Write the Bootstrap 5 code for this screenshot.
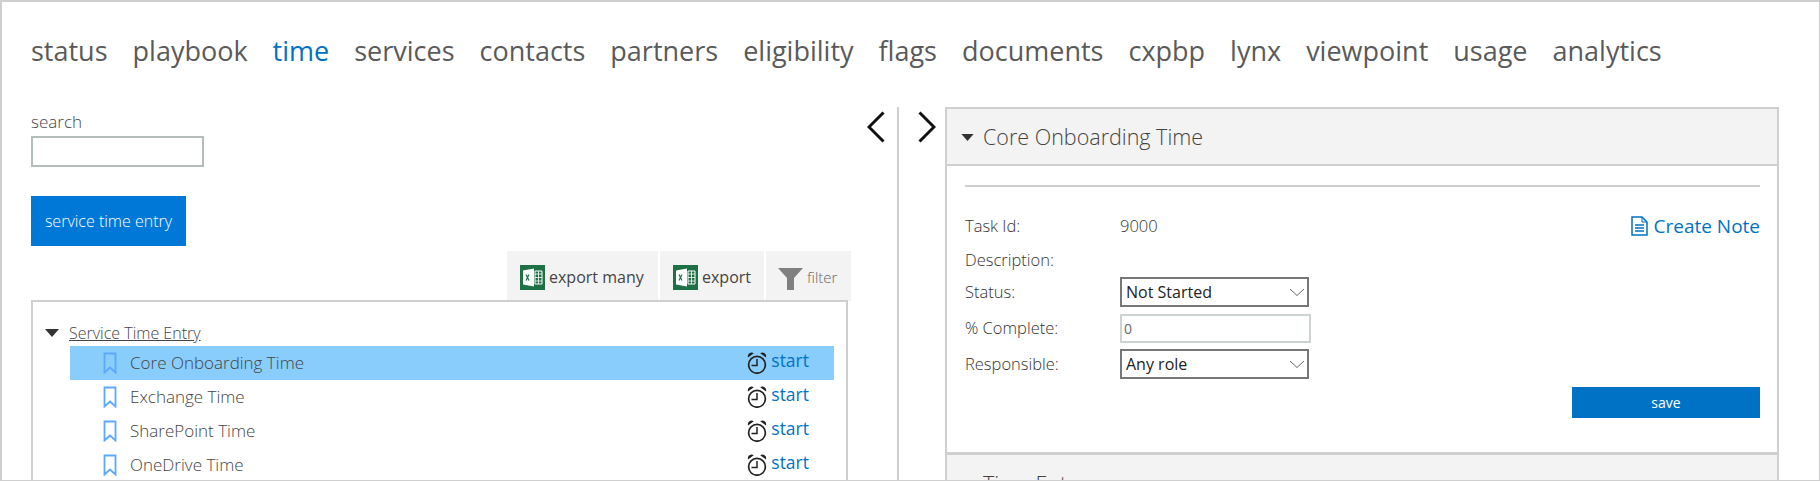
<!DOCTYPE html>
<html lang="en">
<head>
  <meta charset="UTF-8">
  <title>time</title>
  <link href="https://cdn.jsdelivr.net/npm/bootstrap@5.3.3/dist/css/bootstrap.min.css" rel="stylesheet">
  <style>
    html, body { height: 481px; overflow: hidden; }
    body { font-family: "Open Sans", "Liberation Sans", sans-serif; color: #505050; background: #fff; }
    .frame { height: 481px; overflow: hidden; border: 1px solid #cfcfcf; border-top: 2px solid #cfcfcf; border-left-width: 2px; }
    .topnav { padding: 31px 0 0 29px; gap: 25px; height: 105px; font-size: 27px; line-height: 36px; }
    .topnav a { color: #5a5a5a; text-decoration: none; }
    .topnav a.active { color: #0072c6; }
    .leftcol { width: 849px; flex: none; padding: 1px 0 0 29px; }
    .searchlbl { font-size: 17px; font-weight: 300; line-height: 28px; color: #444; display: block; margin: 0; }
    .searchbox { width: 173px; height: 31px; border: 2px solid #b4bcbc; display: block; }
    .btn-entry { width: 155px; height: 50px; margin-top: 29px; background: #0078d7; color: #fff; border: 0; border-radius: 0; font-size: 16px; padding: 0; font-weight: 300; }
    .tabbar { margin-top: 5px; height: 50px; gap: 2px; }
    .tabitem { background: #f3f3f3; height: 50px; display: flex; align-items: center; font-size: 16px; color: #444; padding-top: 2px; }
    .tabitem.many { width: 151px; padding-left: 13px; }
    .tabitem.one { width: 104px; padding-left: 13px; }
    .tabitem.filt { width: 85px; padding-left: 12px; color: #666; font-size: 15px; font-weight: 300; }
    .treebox { width: 817px; height: 300px; border: 2px solid #cfcfcf; padding: 17px 12px 0 12px; margin-top: -1px; position: relative; background: #fff; }
    .treehead { height: 27px; font-size: 16px; line-height: 22px; color: #444; font-weight: 300; }
    .treehead span { text-decoration: underline; margin-left: 10px; }
    .treerow { height: 34px; margin-left: 25px; padding-left: 33px; padding-right: 25px; font-size: 17px; font-weight: 300; color: #444; }
    .treerow.sel { background: #88cdfb; }
    .treerow .lbl { margin-left: 13px; flex-grow: 1; }
    .startlink { color: #0072c6; text-decoration: none; font-size: 17.500px; font-weight: 500; margin-left: 4px; position: relative; top: -3px; }
    .splitter { width: 94px; flex: none; height: 380px; gap: 0; }
    .splitline { width: 2px; background: #cfcfcf; margin: 0 19px 0 12px; height: 100%; }
    .splitter svg { margin-top: 4px; }
    .splitter .first { margin-left: 16px; }
    .panelcol { width: 834px; flex: none; }
    .panelhead { height: 59px; background: #f3f3f3; border: 2px solid #cfcfcf; font-size: 21.500px; font-weight: 300; color: #444; padding: 1px 0 0 14px; gap: 9px; }
    .panelbody { height: 289px; border: 2px solid #cfcfcf; border-top: 0; border-bottom-width: 3px; padding: 19px 17px 0 18px; }
    .panelbody hr { margin: 0 0 22px; border-top: 2px solid #cfcfcf; opacity: 1; }
    .formline { font-size: 16.500px; font-weight: 300; color: #333; }
    .formline.plain { height: 34px; }
    .formline .fieldname { width: 155px; flex: none; }
    .notelink { color: #0072c6; text-decoration: none; font-size: 19px; font-weight: 400; margin-left: auto; gap: 5px; }
    .pickbox { width: 189px; height: 30px; padding: 0 0 0 4px; font-size: 16px; font-weight: 400; color: #222; border: 2px solid #777; border-radius: 0; background-size: 16px 9px; background-position: right 2px center; background-image: url("data:image/svg+xml,%3Csvg xmlns='http://www.w3.org/2000/svg' viewBox='0 0 16 9'%3E%3Cpath d='M1 1l7 6.500L15 1' fill='none' stroke='%23666' stroke-width='1'/%3E%3C/svg%3E"); }
    .pctbox { width: 191px; height: 29px; padding: 0 0 0 2px; font-size: 14px; color: #666; border: 2px solid #cdd3d3; border-radius: 0; }
    .btn-save { width: 188px; height: 31px; background: #0072c6; color: #fff; border: 0; border-radius: 0; font-size: 14px; padding: 0; }
    .gap-status { margin-bottom: 7px; }
    .gap-pct { margin-bottom: 6px; }
  </style>
</head>
<body>
  <svg width="0" height="0" class="d-block">
    <defs>
      <symbol id="ic-book" viewBox="0 0 14 22">
        <path d="M1.500 1.500h11v19l-5.500-5-5.500 5z" fill="none" stroke="#5aa9ff" stroke-width="1.800"/>
      </symbol>
      <symbol id="ic-clock" viewBox="0 0 20 22">
        <path d="M1 5.500a3.800 3.800 0 0 1 5.800-4.200zM19 5.500a3.800 3.800 0 0 0-5.800-4.200z" fill="#222"/>
        <circle cx="10" cy="12.800" r="8.400" fill="none" stroke="#222" stroke-width="1.700"/>
        <path d="M10 7v6.500H4.500" fill="none" stroke="#222" stroke-width="1.500"/>
      </symbol>
      <symbol id="ic-excel" viewBox="0 0 25 25">
        <rect width="25" height="25" fill="#1e7145"/>
        <path d="M3 5.500 14 3.500v18l-11-2z" fill="#fff"/>
        <path d="M15 6h7v13h-7z" fill="none" stroke="#fff" stroke-width="1"/>
        <path d="M15 9h7M15 12.500h7M15 16h7M18.500 6v13" stroke="#fff" stroke-width=".8"/>
        <path d="M6 9.500l3 6M9 9.500l-3 6" stroke="#1e7145" stroke-width="1.200"/>
      </symbol>
      <symbol id="ic-down" viewBox="0 0 14 8">
        <path d="M0 0h14L7 8z" fill="#333"/>
      </symbol>
    </defs>
  </svg>

  <div class="frame">
    <nav class="topnav d-flex">
      <a href="#">status</a>
      <a href="#">playbook</a>
      <a href="#" class="active">time</a>
      <a href="#">services</a>
      <a href="#">contacts</a>
      <a href="#">partners</a>
      <a href="#">eligibility</a>
      <a href="#">flags</a>
      <a href="#">documents</a>
      <a href="#">cxpbp</a>
      <a href="#">lynx</a>
      <a href="#">viewpoint</a>
      <a href="#">usage</a>
      <a href="#">analytics</a>
    </nav>

    <div class="d-flex">
      <div class="leftcol">
        <label class="searchlbl" for="search">search</label>
        <input id="search" class="searchbox" type="text">
        <button class="btn-entry btn" type="button">service time entry</button>

        <div class="tabbar d-flex justify-content-end">
          <div class="tabitem many"><svg width="25" height="25" class="me-1"><use href="#ic-excel"/></svg>export many</div>
          <div class="tabitem one"><svg width="25" height="25" class="me-1"><use href="#ic-excel"/></svg>export</div>
          <div class="tabitem filt">
            <svg width="25" height="25" viewBox="0 0 25 25" class="me-1"><path d="M0 3h25l-9 10v12h-7V13z" fill="#808080"/></svg>filter
          </div>
        </div>

        <div class="treebox">
          <div class="treehead d-flex align-items-center">
            <svg width="14" height="8"><use href="#ic-down"/></svg><span>Service Time Entry</span>
          </div>
          <div class="treerow sel d-flex align-items-center">
            <svg width="14" height="22"><use href="#ic-book"/></svg>
            <span class="lbl">Core Onboarding Time</span>
            <svg width="20" height="22"><use href="#ic-clock"/></svg>
            <a href="#" class="startlink">start</a>
          </div>
          <div class="treerow d-flex align-items-center">
            <svg width="14" height="22"><use href="#ic-book"/></svg>
            <span class="lbl">Exchange Time</span>
            <svg width="20" height="22"><use href="#ic-clock"/></svg>
            <a href="#" class="startlink">start</a>
          </div>
          <div class="treerow d-flex align-items-center">
            <svg width="14" height="22"><use href="#ic-book"/></svg>
            <span class="lbl">SharePoint Time</span>
            <svg width="20" height="22"><use href="#ic-clock"/></svg>
            <a href="#" class="startlink">start</a>
          </div>
          <div class="treerow d-flex align-items-center">
            <svg width="14" height="22"><use href="#ic-book"/></svg>
            <span class="lbl">OneDrive Time</span>
            <svg width="20" height="22"><use href="#ic-clock"/></svg>
            <a href="#" class="startlink">start</a>
          </div>
        </div>
      </div>

      <div class="splitter d-flex align-items-start">
        <svg class="first" width="18" height="32" viewBox="0 0 18 32"><path d="M16.500 1.500 2 16l14.500 14.500" fill="none" stroke="#111" stroke-width="3"/></svg>
        <div class="splitline"></div>
        <svg width="18" height="32" viewBox="0 0 18 32"><path d="M1.500 1.500 16 16 1.500 30.500" fill="none" stroke="#111" stroke-width="3"/></svg>
      </div>

      <div class="panelcol">
        <div class="panelhead d-flex align-items-center">
          <svg width="13" height="7"><use href="#ic-down"/></svg>Core Onboarding Time
        </div>
        <div class="panelbody">
          <hr>
          <div class="formline plain d-flex align-items-center">
            <span class="fieldname">Task Id:</span><span>9000</span>
            <a href="#" class="notelink d-flex align-items-center">
              <svg width="17" height="20" viewBox="0 0 17 20"><path d="M1 1h10l5 5v13H1z" fill="none" stroke="#0072c6" stroke-width="1.500"/><path d="M11 1v5h5" fill="none" stroke="#0072c6"/><path d="M4 9h9M4 12h9M4 15h9" stroke="#0072c6" stroke-width="1.400"/></svg>
              Create Note
            </a>
          </div>
          <div class="formline plain d-flex align-items-center"><span class="fieldname">Description:</span></div>
          <div class="formline gap-status d-flex align-items-center">
            <span class="fieldname">Status:</span>
            <select class="form-select pickbox"><option>Not Started</option></select>
          </div>
          <div class="formline gap-pct d-flex align-items-center">
            <span class="fieldname">% Complete:</span>
            <input class="form-control pctbox" type="text" value="0">
          </div>
          <div class="formline d-flex align-items-center">
            <span class="fieldname">Responsible:</span>
            <select class="form-select pickbox"><option>Any role</option></select>
          </div>
          <div class="d-flex justify-content-end mt-2">
            <button class="btn btn-save" type="button">save</button>
          </div>
        </div>
        <div class="panelhead d-flex align-items-center border-top-0">
          <svg width="13" height="7"><use href="#ic-down"/></svg>Time Entry
        </div>
      </div>
    </div>
  </div>
  <script src="https://cdn.jsdelivr.net/npm/bootstrap@5.3.3/dist/js/bootstrap.bundle.min.js"></script>
</body>
</html>
